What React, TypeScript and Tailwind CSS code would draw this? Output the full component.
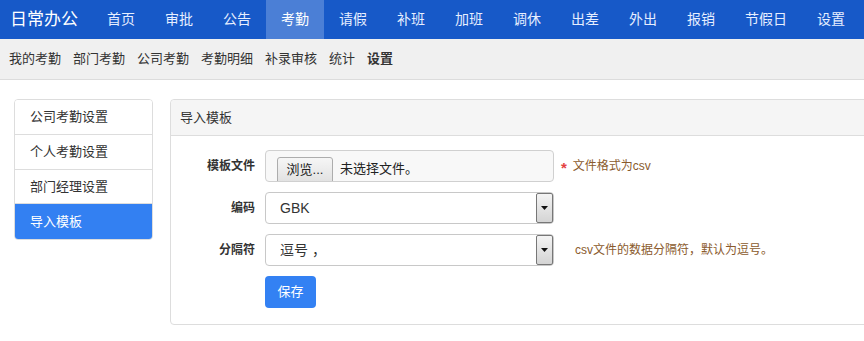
import React from "react";

const font = { fontFamily: '"Liberation Sans", "Noto Sans CJK SC", sans-serif' };

const navItems = ["首页", "审批", "公告", "考勤", "请假", "补班", "加班", "调休", "出差", "外出", "报销", "节假日", "设置"];
const subItems = ["我的考勤", "部门考勤", "公司考勤", "考勤明细", "补录审核", "统计", "设置"];
const sideItems = ["公司考勤设置", "个人考勤设置", "部门经理设置", "导入模板"];

function SelectBox({ value }: { value: string }) {
  return (
    <div className="relative h-[32px] w-[289px] rounded-[4px] border border-[#c8c8c8] bg-white flex items-center">
      <span className="pl-[14px] text-[14px] text-[#333]">{value}</span>
      <div className="absolute right-[0px] top-[0px] bottom-[0px] w-[17px] border border-[#777] rounded-[2px] bg-gradient-to-b from-[#f4f4f4] to-[#d4d4d4] flex items-center justify-center">
        <svg width="7" height="4" viewBox="0 0 7 4">
          <path d="M0 0 L7 0 L3.5 4 Z" fill="#111" />
        </svg>
      </div>
    </div>
  );
}

export default function App() {
  return (
    <div style={font} className="w-[864px] h-[341px] bg-white overflow-hidden text-[#333]">
      {/* top nav */}
      <div className="h-[39px] bg-[#1759c8] flex items-stretch">
        <div className="w-[92px] pl-[10px] flex items-center text-[17px] text-white">日常办公</div>
        {navItems.map((n, i) => (
          <div
            key={n + i}
            className={
              "px-[15px] flex items-center text-[14px] " +
              (i === 3 ? "bg-[#4b7fd6] text-white" : "text-[#e6eeff]")
            }
          >
            {n}
          </div>
        ))}
      </div>
      {/* sub nav */}
      <div className="h-[41px] bg-[#f0f0f0] border-b border-[#dcdcdc] flex items-center pl-[9px] gap-[12px] text-[13px] text-[#333]">
        {subItems.map((s, i) => (
          <span key={s + i} className={i === subItems.length - 1 ? "font-bold" : ""}>
            {s}
          </span>
        ))}
      </div>
      {/* content */}
      <div className="flex pt-[19px] pl-[14px]">
        <div className="w-[139px] h-[141px] rounded-[4px] border border-[#ddd] overflow-hidden flex flex-col text-[13px]">
          {sideItems.map((s, i) => (
            <div
              key={s}
              className={
                "h-[35px] flex items-center pl-[15px] " +
                (i === sideItems.length - 1
                  ? "bg-[#3380f2] text-white"
                  : "border-b border-[#ddd] text-[#333] bg-white")
              }
            >
              {s}
            </div>
          ))}
        </div>
        <div className="ml-[17px] flex-1 h-[226px] -mr-[10px] rounded-[4px] border border-[#ddd] flex flex-col">
          <div className="h-[36px] bg-[#f5f5f5] border-b border-[#ddd] flex items-center pl-[9px] text-[13px] text-[#333] rounded-t-[4px]">
            导入模板
          </div>
          <div className="pt-[14px] flex flex-col gap-[10px]">
            {/* row 1 */}
            <div className="flex items-center">
              <div className="w-[84px] text-right text-[12px] font-bold text-[#333]">模板文件</div>
              <div className="ml-[10px] h-[32px] w-[289px] rounded-[4px] border border-[#d0d0d0] bg-[#f8f8f8] flex items-end overflow-hidden">
                <div className="ml-[11px] h-[25px] w-[56px] border border-[#adadad] rounded-t-[3px] bg-gradient-to-b from-[#f6f6f6] to-[#e2e2e2] flex items-center justify-center text-[13px] text-[#222] mb-[-1px]">
                  浏览...
                </div>
                <span className="ml-[7px] mb-[3px] text-[13px] text-[#222]">未选择文件。</span>
              </div>
              <span className="ml-[7px] text-[15px] font-bold text-[#e34242] leading-none mt-[3px]">*</span>
              <span className="ml-[6px] text-[12px] text-[#8a5a2c]">文件格式为csv</span>
            </div>
            {/* row 2 */}
            <div className="flex items-center">
              <div className="w-[84px] text-right text-[12px] font-bold text-[#333]">编码</div>
              <div className="ml-[10px]">
                <SelectBox value="GBK" />
              </div>
            </div>
            {/* row 3 */}
            <div className="flex items-center">
              <div className="w-[84px] text-right text-[12px] font-bold text-[#333]">分隔符</div>
              <div className="ml-[10px]">
                <SelectBox value="逗号 ，" />
              </div>
              <span className="ml-[21px] text-[12px] text-[#8a5a2c]">csv文件的数据分隔符，默认为逗号。</span>
            </div>
            {/* save */}
            <div className="pl-[94px]">
              <div className="w-[51px] h-[32px] rounded-[4px] bg-[#3381f3] flex items-center justify-center text-[13px] text-white">
                保存
              </div>
            </div>
          </div>
        </div>
      </div>
    </div>
  );
}
